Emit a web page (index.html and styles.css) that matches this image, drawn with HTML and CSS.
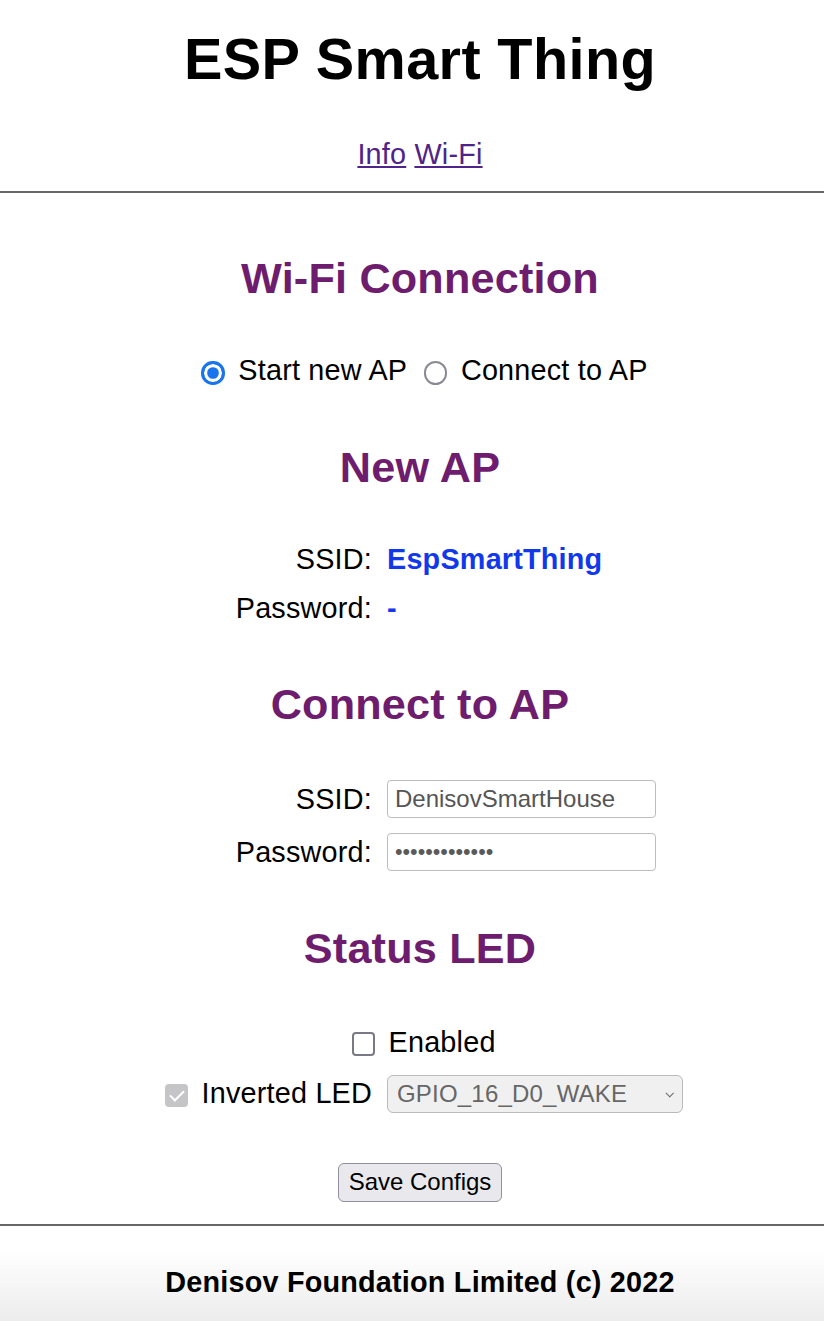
FILE: index.html
```html
<!DOCTYPE html>
<html lang="en">
<head>
<meta charset="utf-8">
<title>ESP Smart Thing</title>
<link rel="stylesheet" href="styles.css">
</head>
<body>
<header class="header">
  <h1 class="title">ESP Smart Thing</h1>
  <nav class="nav"><a class="nav-link" href="#info">Info</a> <a class="nav-link" href="#wifi">Wi-Fi</a></nav>
</header>
<hr class="rule rule-top">
<main class="content">
  <h2 class="section-title section-first">Wi-Fi Connection</h2>
  <div class="mode">
    <label class="choice"><input class="radio" type="radio" name="mode" checked> Start new AP</label>
    <label class="choice"><input class="radio" type="radio" name="mode"> Connect to AP</label>
  </div>

  <h2 class="section-title">New AP</h2>
  <div class="fields fields-ap">
    <div class="field-label">SSID:</div>
    <div class="field-value value-strong">EspSmartThing</div>
    <div class="field-label">Password:</div>
    <div class="field-value value-strong">-</div>
  </div>

  <h2 class="section-title">Connect to AP</h2>
  <div class="fields fields-connect">
    <label class="field-label" for="ssid">SSID:</label>
    <div class="field-value"><input class="text-input" id="ssid" type="text" value="DenisovSmartHouse"></div>
    <label class="field-label" for="pass">Password:</label>
    <div class="field-value"><input class="text-input text-input-secret" id="pass" type="password" value="1234567890123"></div>
  </div>

  <h2 class="section-title section-led">Status LED</h2>
  <div class="fields fields-led">
    <label class="field-full"><input class="check" type="checkbox"> Enabled</label>
    <label class="field-label"><input class="check" type="checkbox" checked disabled> Inverted LED</label>
    <div class="field-value">
      <span class="select-wrap">
        <select class="select" disabled>
          <option>GPIO_16_D0_WAKE</option>
        </select>
      </span>
    </div>
  </div>

  <div class="actions">
    <button class="save" type="button">Save Configs</button>
  </div>
</main>
<hr class="rule rule-bottom">
<footer class="footer">
  <p class="copyright">Denisov Foundation Limited (c) 2022</p>
</footer>
</body>
</html>
```

FILE: styles.css
```css
* {
  box-sizing: border-box;
}

html {
  background: #ffffff;
}

body {
  margin: 0;
  font-family: "Liberation Sans", Arial, Helvetica, sans-serif;
  font-size: 28.8px;
  line-height: 33px;
  letter-spacing: 0.2px;
  color: #000000;
}

.header,
.content,
.footer {
  padding-left: 16px;
  text-align: center;
}

.title {
  margin: 26px 0 0;
  font-size: 57.6px;
  line-height: 66px;
  font-weight: bold;
  letter-spacing: 0.4px;
}

.nav {
  margin-top: 46px;
}

.nav-link {
  color: #4f2389;
  text-decoration: underline;
}

.rule {
  margin: 0;
  border: 0;
  height: 2px;
  background: #676767;
}

.rule-top {
  margin-top: 20px;
}

.rule-bottom {
  margin-top: 22.4px;
}

.section-title {
  margin: 54.5px 0 0;
  font-size: 43.2px;
  line-height: 50px;
  font-weight: bold;
  color: #6e1c6e;
}

.section-first {
  margin-top: 60.3px;
}

.section-led {
  margin-top: 51.5px;
}

.mode {
  margin-top: 51.2px;
}

.radio {
  appearance: none;
  -webkit-appearance: none;
  width: 23.4px;
  height: 23.4px;
  margin: 0 5.4px 0 9px;
  border: 2.4px solid #8a8a95;
  border-radius: 50%;
  background: #ffffff;
  vertical-align: middle;
}

.radio:checked {
  border: 3px solid #1a74ee;
  background: #1a74ee;
  box-shadow: inset 0 0 0 3.2px #ffffff;
}

.fields {
  display: grid;
  grid-template-columns: 215px 296px;
  column-gap: 15px;
  justify-content: center;
  align-items: center;
  margin-top: 51px;
}

.fields-ap {
  row-gap: 15.8px;
}

.fields-connect {
  row-gap: 15.4px;
}

.fields-led {
  row-gap: 16px;
  margin-top: 53px;
}

.field-label {
  text-align: right;
  white-space: nowrap;
}

.field-value {
  text-align: left;
  justify-self: start;
}

.field-full {
  grid-column: 1 / -1;
  text-align: center;
  white-space: nowrap;
}

.value-strong {
  font-weight: bold;
  color: #1238ec;
}

.text-input {
  display: block;
  width: 269px;
  height: 37.8px;
  margin: 0;
  padding: 0 7px;
  font-family: "Liberation Sans", Arial, sans-serif;
  font-size: 24px;
  color: #555555;
  background: #ffffff;
  border: 1px solid #bdbdbd;
  border-radius: 4px;
}

.text-input-secret {
  font-size: 21.6px;
  color: #5a5a5a;
}

.check {
  appearance: none;
  -webkit-appearance: none;
  position: relative;
  width: 23.4px;
  height: 23.4px;
  margin: 0 5.4px 0 7.2px;
  border: 2.2px solid #7a7a84;
  border-radius: 4px;
  background: #ffffff;
  vertical-align: middle;
}

.check:checked:disabled {
  border-color: #c5c5c8;
  background: #c5c5c8;
}

.check:checked::after {
  content: "";
  position: absolute;
  left: 6.2px;
  top: 1.6px;
  width: 6px;
  height: 12px;
  border: solid #ffffff;
  border-width: 0 2.6px 2.6px 0;
  transform: rotate(45deg);
}

.select-wrap {
  position: relative;
  display: block;
}

.select-wrap::after {
  content: "";
  position: absolute;
  right: 11px;
  top: 50%;
  width: 4.5px;
  height: 4.5px;
  border: solid #6a6a6a;
  border-width: 0 1.2px 1.2px 0;
  transform: translateY(-70%) rotate(45deg);
  pointer-events: none;
}

.select {
  appearance: none;
  -webkit-appearance: none;
  display: block;
  width: 296px;
  height: 37.8px;
  margin: 0;
  padding: 0 9px;
  font-family: "Liberation Sans", Arial, sans-serif;
  font-size: 24px;
  letter-spacing: 0.2px;
  color: #666666;
  background: #f0f0f0;
  border: 1px solid #bbbbbb;
  border-radius: 6px;
  opacity: 1;
}

.actions {
  display: flex;
  justify-content: center;
  margin-top: 50px;
}

.save {
  margin: 0;
  padding: 4.5px 9.5px;
  font-family: "Liberation Sans", Arial, sans-serif;
  font-size: 24px;
  line-height: 28px;
  color: #000000;
  background: #e9e9ed;
  border: 1.5px solid #8f8f9d;
  border-radius: 6px;
}

.footer {
  padding-top: 40.5px;
  padding-bottom: 21.5px;
  background: linear-gradient(to bottom, #ffffff 0%, #ffffff 25%, #ececec 100%);
}

.copyright {
  margin: 0;
  font-weight: bold;
}
```
